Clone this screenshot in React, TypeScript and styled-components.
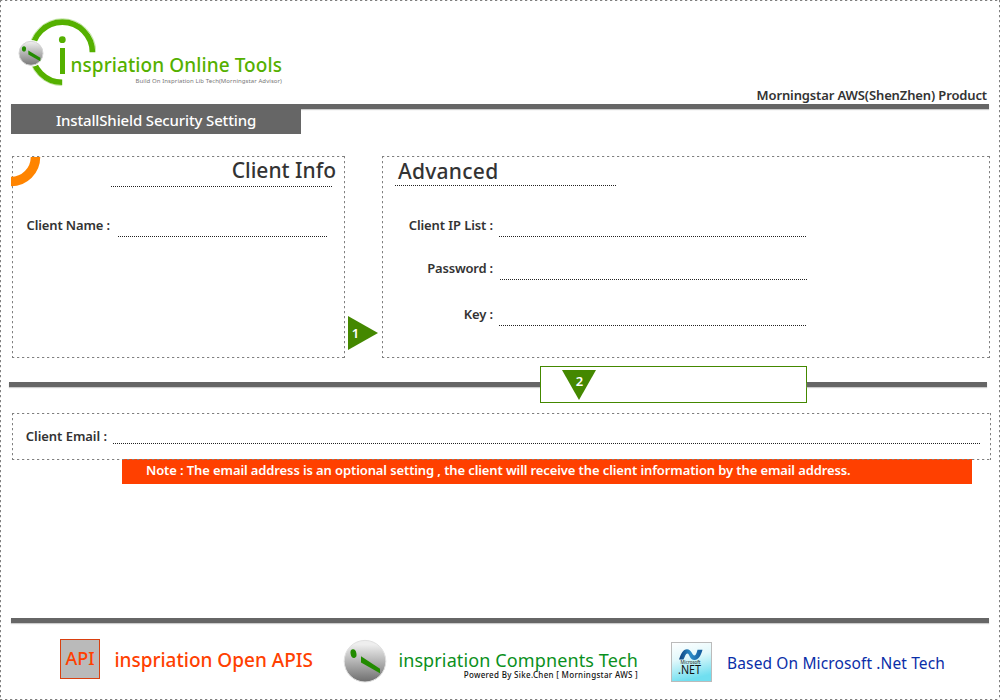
import React from "react";
import styled, { createGlobalStyle, css } from "styled-components";

const Global = createGlobalStyle`
  * { box-sizing: border-box; }
  body { margin: 0; background: #fff; font-family: "Noto Sans", "Open Sans", sans-serif; color: #333; }
`;

const dashes = "#808080 0 2px, rgba(128, 128, 128, 0.25) 2px 3px, transparent 3px 5px";

const dashed = css`
  background-image:
    repeating-linear-gradient(90deg, ${dashes}),
    repeating-linear-gradient(90deg, ${dashes}),
    repeating-linear-gradient(180deg, ${dashes}),
    repeating-linear-gradient(180deg, ${dashes});
  background-size: 100% 1px, 100% 1px, 1px 100%, 1px 100%;
  background-position: 0 0, 0 100%, 0 0, 100% 0;
  background-repeat: no-repeat;
`;

const Frame = styled.div`
  ${dashed}
  width: 1000px;
  height: 700px;
  display: flex;
  flex-direction: column;
  overflow: hidden;
`;

const Label = styled.span<{ $size: number; $track?: number; $weight?: number; $color?: string }>`
  font-size: ${(p) => p.$size}px;
  letter-spacing: ${(p) => p.$track ?? 0}px;
  font-weight: ${(p) => p.$weight ?? 400};
  color: ${(p) => p.$color ?? "#333"};
  line-height: 1;
  white-space: nowrap;
`;

const Header = styled.header`
  height: 104px;
  padding: 18px 13px 0 18px;
  display: flex;
  justify-content: space-between;
`;

const Brand = styled.div`
  display: flex;
`;

const BrandText = styled.div`
  width: 213px;
  margin-left: -27px;
  padding-top: 38px;
  display: flex;
  flex-direction: column;
  align-items: flex-end;
  gap: 3px;
`;

const Product = styled.div`
  align-self: flex-end;
  padding-bottom: 2px;
  display: flex;
`;

const Bar = styled.div`
  flex: none;
  height: 5px;
  margin: 0 11px;
  background: #666;
  box-shadow: 0 1px 1px #ccc;
`;

const Tab = styled.div`
  flex: none;
  width: 290px;
  height: 25px;
  margin-left: 11px;
  padding-top: 4px;
  display: flex;
  justify-content: center;
  background: #666;
  position: relative;
`;

const Panels = styled.div`
  height: 202px;
  margin: 22px 10px 0 12px;
  display: flex;
`;

const Panel = styled.section<{ $width: number }>`
  ${dashed}
  width: ${(p) => p.$width}px;
  display: flex;
  flex-direction: column;
  position: relative;
`;

const Dots = styled.div<{ $width: number }>`
  flex: none;
  width: ${(p) => p.$width}px;
  height: 1px;
  background: repeating-linear-gradient(90deg, #222 0 1px, #fff 1px 2px);
`;

const Corner = styled.svg`
  position: absolute;
  left: -1px;
  top: 1px;
`;

const ClientTitle = styled.div`
  display: flex;
  flex-direction: column;
  align-items: flex-end;
  padding: 4px 9px 0 0;
  height: 31px;
  gap: 5px;
`;

const TitleLine = styled.div`
  margin-right: 3px;
`;

const AdvancedTitle = styled.div`
  display: flex;
  flex-direction: column;
  padding: 5px 0 0 13px;
  height: 31px;
  gap: 3px;
`;

const AdvancedText = styled.div`
  display: flex;
  padding-left: 3px;
`;

const Field = styled.div<{ $labelWidth: number; $top: number; $gap: number; $lift?: number }>`
  display: flex;
  align-items: flex-end;
  height: 18px;
  margin-top: ${(p) => p.$top}px;
  gap: ${(p) => p.$gap}px;
  > :first-child {
    width: ${(p) => p.$labelWidth}px;
    text-align: right;
    padding-bottom: ${(p) => p.$lift ?? 5}px;
  }
`;

const StepArrow = styled.svg`
  flex: none;
  margin: 160px 4px 0 3px;
`;

const Divider = styled.div`
  flex: none;
  height: 37px;
  margin: 8px 13px 0 9px;
  display: flex;
  align-items: center;
`;

const Rule = styled.div<{ $width: number }>`
  width: ${(p) => p.$width}px;
  height: 5px;
  background: #666;
  box-shadow: 0 1px 1px #ccc;
`;

const StepBox = styled.div`
  width: 267px;
  height: 37px;
  padding: 3px 0 0 21px;
  border: 1px solid #448800;
  background: #fff;
`;

const EmailPanel = styled.section`
  ${dashed}
  flex: none;
  width: 979px;
  height: 47px;
  margin: 10px 0 0 12px;
  padding-top: 13px;
  position: relative;
  z-index: 1;
`;

const Note = styled.div`
  flex: none;
  width: 850px;
  height: 25px;
  margin: -1px 0 0 122px;
  padding: 5px 0 0 24px;
  display: flex;
  align-items: flex-start;
  background: #ff4000;
`;

const Spacer = styled.div`
  flex: 1;
`;

const Footer = styled.footer`
  height: 77px;
  padding-left: 60px;
  display: flex;
`;

const ApiBadge = styled.div`
  width: 40px;
  height: 40px;
  margin-top: 16px;
  padding-top: 9px;
  display: flex;
  justify-content: center;
  background: #bababa;
  border: 1px solid #d94010;
`;

const FootText = styled.div<{ $left: number; $top: number; $width: number }>`
  flex: none;
  width: ${(p) => p.$width}px;
  margin-left: ${(p) => p.$left}px;
  padding-top: ${(p) => p.$top}px;
  display: flex;
  flex-direction: column;
  align-items: flex-end;
  gap: 2px;
`;

const FootIcon = styled.svg<{ $left: number; $top: number }>`
  flex: none;
  margin: ${(p) => p.$top}px 0 0 ${(p) => p.$left}px;
`;

const GREEN = "#55b000";

function LogoMark() {
  return (
    <svg width="78" height="70" viewBox="18 18 78 70">
      <defs>
        <linearGradient id="ballSmall" x1="0" y1="0" x2="0" y2="1">
          <stop offset="0" stopColor="#f0f0f0" />
          <stop offset="1" stopColor="#777" />
        </linearGradient>
      </defs>
      <path d="M62.2 85.7A33.5 33.5 0 1 1 95.9 52.2" fill="none" stroke="#c5e6a8" strokeWidth="1" />
      <path d="M62.2 82.3A30.1 30.1 0 1 1 92.4 52.2" fill="none" stroke={GREEN} strokeWidth="5.6" />
      <circle cx="31" cy="53.3" r="13.3" fill="#fff" />
      <circle cx="31" cy="53.3" r="12" fill="url(#ballSmall)" stroke="#d5d5d5" />
      <ellipse cx="24" cy="49" rx="2.1" ry="2.7" fill="#228b00" />
      <path d="M28.3 50.6L40.3 57.8V61.2L28.3 54.6Z" fill="#228b00" />
      <circle cx="62.3" cy="39.7" r="3.4" fill={GREEN} />
      <rect x="60" y="48" width="5" height="26" fill={GREEN} />
    </svg>
  );
}

function Ball() {
  return (
    <FootIcon $left={30} $top={16} width="44" height="44" viewBox="343 639 44 44">
      <defs>
        <linearGradient id="ballLarge" x1="0" y1="0" x2="0" y2="1">
          <stop offset="0.1" stopColor="#eee" />
          <stop offset="1" stopColor="#6e6e6e" />
        </linearGradient>
      </defs>
      <circle cx="365" cy="661.2" r="20.8" fill="url(#ballLarge)" stroke="#e0e0e0" />
      <ellipse cx="353.5" cy="653.6" rx="2.9" ry="4.4" fill="#228b00" transform="rotate(-12 353.5 653.6)" />
      <path d="M361 656.3L380 668.8V673.3L361 662.5Z" fill="#228b00" />
    </FootIcon>
  );
}

function NetIcon() {
  return (
    <FootIcon $left={33} $top={19} width="42" height="41" viewBox="0 0 42 41">
      <defs>
        <linearGradient id="netBg" x1="0" y1="0" x2="0.25" y2="1">
          <stop offset="0" stopColor="#fff" />
          <stop offset="0.45" stopColor="#e2f8fb" />
          <stop offset="1" stopColor="#70dff0" />
        </linearGradient>
        <linearGradient id="netWave" x1="0" y1="0" x2="1" y2="0">
          <stop offset="0" stopColor="#0d3f7c" />
          <stop offset="0.5" stopColor="#2a8cc8" />
          <stop offset="1" stopColor="#12589a" />
        </linearGradient>
      </defs>
      <rect x="0.5" y="0.5" width="40" height="39" fill="url(#netBg)" stroke="#bbb" />
      <path d="M8 17.5C10 12 12 7.300 16 7.300C20.500 7.300 21 13.500 23.500 13.500C25 13.500 25.800 10.500 26.500 7.800H31.500C30 13 28 18 23.500 18C18.500 18 18.500 11.500 16.500 11.500C14.500 11.500 14 15 12.500 17.500Z" fill="url(#netWave)" />
      <text x="19.500" y="22.300" fontSize="4.600" textLength="20" lengthAdjust="spacingAndGlyphs" textAnchor="middle" fill="#222">Microsoft</text>
      <text x="18.500" y="32" fontSize="12" textLength="23" lengthAdjust="spacingAndGlyphs" textAnchor="middle" fill="#111">.NET</text>
    </FootIcon>
  );
}

export default function App() {
  return (
    <Frame>
      <Global />
      <Header>
        <Brand>
          <LogoMark />
          <BrandText>
            <Label $size={19} $track={0.08} $weight={500} $color={GREEN}>nspriation Online Tools</Label>
            <Label $size={6} $track={0.08} $color="#777">Build On Inspriation Lib Tech(Morningstar Advisor)</Label>
          </BrandText>
        </Brand>
        <Product>
          <Label $size={13} $track={-0.13} $weight={600}>Morningstar AWS(ShenZhen) Product</Label>
        </Product>
      </Header>
      <Bar />
      <Tab>
        <Label $size={15} $track={-0.15} $weight={500} $color="#fff">InstallShield Security Setting</Label>
      </Tab>
      <Panels>
        <Panel $width={333}>
          <Corner width="30" height="30" viewBox="0 0 30 30">
            <path d="M0 24.500A24.500 24.500 0 0 0 24.500 0" fill="none" stroke="#ff8400" strokeWidth="9.500" />
          </Corner>
          <ClientTitle>
            <Label $size={21} $weight={500}>Client Info</Label>
            <TitleLine><Dots $width={222} /></TitleLine>
          </ClientTitle>
          <Field $labelWidth={98} $top={32} $gap={8}>
            <Label $size={13} $track={-0.13} $weight={600}>Client Name :</Label>
            <Dots $width={209} />
          </Field>
        </Panel>
        <StepArrow width="30" height="34" viewBox="0 0 30 34">
          <path d="M0 0L30 17L0 34Z" fill="#448800" />
          <text x="7.500" y="22" fontSize="13" fontWeight="600" textAnchor="middle" fill="#fff">1</text>
        </StepArrow>
        <Panel $width={608}>
          <AdvancedTitle>
            <AdvancedText><Label $size={21} $track={0.25} $weight={500}>Advanced</Label></AdvancedText>
            <Dots $width={221} />
          </AdvancedTitle>
          <Field $labelWidth={111} $top={32} $gap={6}>
            <Label $size={13} $track={-0.1} $weight={600}>Client IP List :</Label>
            <Dots $width={307} />
          </Field>
          <Field $labelWidth={111} $top={25} $gap={7}>
            <Label $size={13} $track={-0.2} $weight={600}>Password :</Label>
            <Dots $width={307} />
          </Field>
          <Field $labelWidth={111} $top={28} $gap={6}>
            <Label $size={13} $track={-0.1} $weight={600}>Key :</Label>
            <Dots $width={307} />
          </Field>
        </Panel>
      </Panels>
      <Divider>
        <Rule $width={531} />
        <StepBox>
          <svg width="34" height="30" viewBox="0 0 34 30">
            <path d="M0 0H34L17 30Z" fill="#448800" />
            <text x="17.500" y="16" fontSize="13" fontWeight="600" textAnchor="middle" fill="#fff">2</text>
          </svg>
        </StepBox>
        <Rule $width={180} />
      </Divider>
      <EmailPanel>
        <Field $labelWidth={95} $top={0} $gap={6} $lift={1}>
          <Label $size={13} $track={-0.05} $weight={600}>Client Email :</Label>
          <Dots $width={867} />
        </Field>
      </EmailPanel>
      <Note>
        <Label $size={13} $track={-0.11} $weight={600} $color="#fff">Note : The email address is an optional setting , the client will receive the client information by the email address.</Label>
      </Note>
      <Spacer />
      <Bar />
      <Footer>
        <ApiBadge>
          <Label $size={18} $weight={500} $color="#ff4000">API</Label>
        </ApiBadge>
        <FootText $left={13} $top={28} $width={200}>
          <Label $size={19} $weight={500} $color="#ff4000">inspriation Open APIS</Label>
        </FootText>
        <Ball />
        <FootText $left={12} $top={28} $width={239}>
          <Label $size={18} $track={0.12} $color="#0a9020">inspriation Compnents Tech</Label>
          <Label $size={8} $track={0.3} $weight={500} $color="#111">Powered By Sike.Chen [ Morningstar AWS ]</Label>
        </FootText>
        <NetIcon />
        <FootText $left={15} $top={33} $width={217}>
          <Label $size={15.5} $track={0.12} $color="#0a2ea8">Based On Microsoft .Net Tech</Label>
        </FootText>
      </Footer>
    </Frame>
  );
}
